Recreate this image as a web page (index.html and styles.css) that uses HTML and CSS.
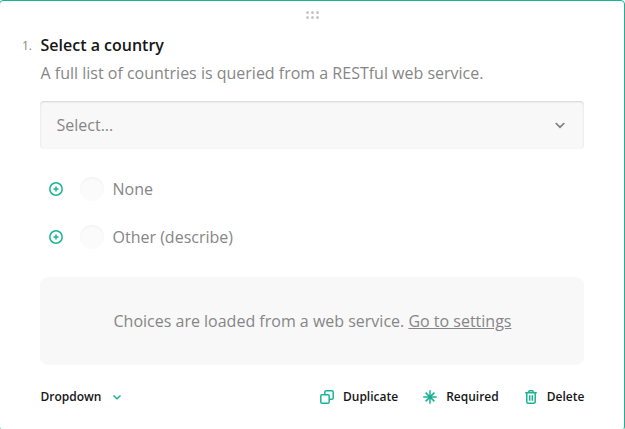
FILE: index.html
```html
<!DOCTYPE html>
<html lang="en">
<head>
<meta charset="utf-8">
<title>Select a country</title>
<link rel="stylesheet" href="styles.css">
</head>
<body>
<main class="card">
  <svg class="grip" width="14" height="8" viewBox="0 0 14 8"><circle cx="2.500" cy="1.500" r="1.500"/><circle cx="7.500" cy="1.500" r="1.500"/><circle cx="12.500" cy="1.500" r="1.500"/><circle cx="2.500" cy="6.500" r="1.500"/><circle cx="7.500" cy="6.500" r="1.500"/><circle cx="12.500" cy="6.500" r="1.500"/></svg>
  <header class="heading">
    <span class="number">1.</span>
    <div>
      <h1 class="title">Select a country</h1>
      <p class="description">A full list of countries is queried from a RESTful web service.</p>
    </div>
  </header>
  <section class="body">
    <div class="select"><span>Select...</span>
      <svg width="16" height="16" viewBox="0 0 16 16"><path d="M3.7 6 8 10.2 12.3 6" fill="none" stroke="#808080" stroke-width="1.7"/></svg>
    </div>
    <div class="choices">
      <div class="choice">
        <svg class="add" width="16" height="16" viewBox="0 0 16 16"><circle cx="8" cy="8" r="6.200"/><path d="M5.500 8h5M8 5.500v5"/></svg>
        <span class="radio"></span><span>None</span>
      </div>
      <div class="choice">
        <svg class="add" width="16" height="16" viewBox="0 0 16 16"><circle cx="8" cy="8" r="6.200"/><path d="M5.500 8h5M8 5.500v5"/></svg>
        <span class="radio"></span><span>Other (describe)</span>
      </div>
    </div>
    <div class="notice"><span>Choices are loaded from a web service. <a class="link">Go to settings</a></span></div>
  </section>
  <footer class="toolbar">
    <div class="action type"><span>Dropdown</span>
      <svg class="icon" width="16" height="16" viewBox="0 0 16 16"><path d="M4.500 6.500 8 9.800 11.500 6.500"/></svg>
    </div>
    <div class="action"><svg class="icon" width="16" height="16" viewBox="0 0 16 16"><rect x="1.800" y="5.800" width="8.400" height="8.400" rx="1.300"/><path d="M5.800 5.800V3.100q0-1.300 1.300-1.300h5.800q1.300 0 1.300 1.300v5.800q0 1.300-1.300 1.300h-2.700"/></svg><span>Duplicate</span></div>
    <div class="action"><svg class="icon" width="16" height="16" viewBox="0 0 16 16"><path d="M8 1.200v13.600M1.200 8h13.600M3.600 3.600l8.800 8.800M12.400 3.600l-8.800 8.800"/></svg><span>Required</span></div>
    <div class="action"><svg class="icon" width="16" height="16" viewBox="0 0 16 16"><path d="M2.200 3.800h11.600M5.700 3.800V2.900q0-1.100 1.100-1.100h2.400q1.100 0 1.100 1.100v.9M3.800 4v8.900q0 1.300 1.300 1.300h5.800q1.300 0 1.300-1.300V4"/><path d="M6.700 6.200v5.600M9.300 6.200v5.600"/></svg><span>Delete</span></div>
  </footer>
</main>
</body>
</html>
```
FILE: styles.css
```css
* { box-sizing: border-box; }
body { margin: 0; overflow: hidden; background: #fff; font: 16px/24px "Open Sans", sans-serif; }
svg { display: block; flex: none; }
.card { width: 626px; height: 431px; margin-left: -1px; padding: 10px 40px 0; border: 1px solid #19b394; border-radius: 4px; background: #fff; }
.grip { margin: 0 auto; fill: #c6c6c6; }
.heading { display: flex; margin: 14px 0 0 -18px; }
.number { width: 18.5px; padding-top: 1px; font-size: 12px; color: #868686; }
.title { margin: 0; font-size: 16px; font-weight: 600; color: #161616; }
.description { margin: 4px 0 0; color: #868686; }
.body { color: #868686; }
.select { display: flex; align-items: center; justify-content: space-between; height: 48px; margin-top: 16px; padding: 0 16px 0 16.5px; border-radius: 4px; background: #f8f8f8; box-shadow: inset 0 1px 2px rgba(0,0,0,.15); }
.choices { margin-top: 16px; }
.choice { display: flex; align-items: center; height: 48px; padding-left: 8px; }
.add { fill: none; stroke: #19b394; stroke-width: 1.5; }
.radio { width: 24px; height: 24px; margin: 0 8.5px 0 16px; border-radius: 50%; background: #fbfbfb; box-shadow: inset 0 1px 2px rgba(0,0,0,.05); }
.notice { display: flex; align-items: center; justify-content: center; height: 88px; margin-top: 16px; padding-left: 1px; border-radius: 8px; background: #f8f8f8; }
.link { text-decoration: underline; }
.toolbar { display: flex; gap: 24px; margin: 24px -.4px 0 .5px; color: #161616; font-size: 12px; font-weight: 600; line-height: 16px; }
.action { display: flex; gap: 8px; }
.type { margin-right: auto; }
.icon { fill: none; stroke: #19b394; stroke-width: 1.5; }
```
